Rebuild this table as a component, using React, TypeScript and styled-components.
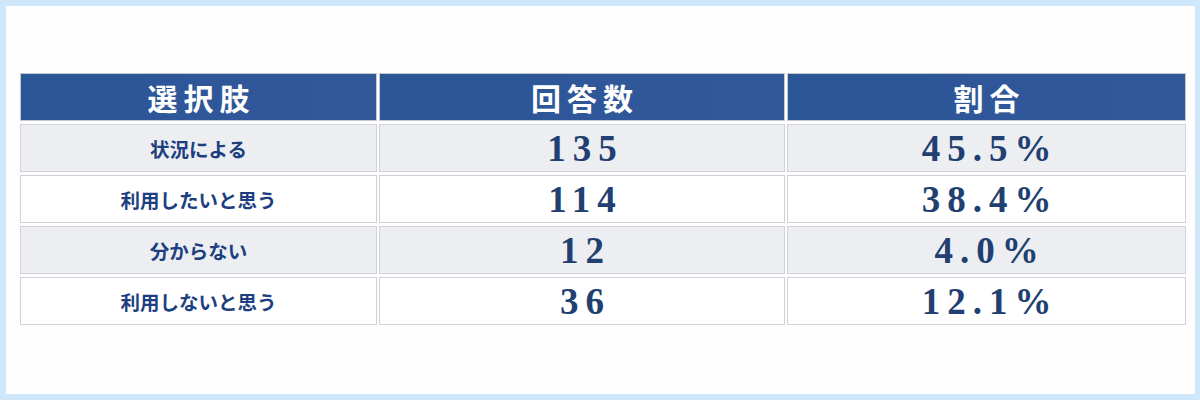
import React from "react";
import styled, { createGlobalStyle } from "styled-components";

const GlobalStyle = createGlobalStyle`
  html, body {
    margin: 0;
    padding: 0;
    background: #cfe7fb;
  }
  * {
    box-sizing: border-box;
  }
`;

const Frame = styled.div`
  width: 1200px;
  height: 400px;
  padding: 6px 5px 6px 6px;
`;

const Panel = styled.div`
  height: 100%;
  background: #fefefe;
  padding: 67px 0 0 14px;
`;

const Grid = styled.div`
  display: grid;
  grid-template-columns: 357px 406px 399px;
  column-gap: 2px;
  row-gap: 3px;
  grid-auto-rows: 48px;
`;

const HeadCell = styled.div`
  display: flex;
  align-items: center;
  justify-content: center;
  background: linear-gradient(90deg, #2a5597, #33589a);
  border: 1px solid #c4c8cf;
  color: #ffffff;
  font: 700 30px "Noto Sans CJK JP", "Noto Sans", sans-serif;
  letter-spacing: 6px;
  text-indent: 6px;
`;

const Cell = styled.div<{ $shade: boolean }>`
  display: flex;
  align-items: center;
  justify-content: center;
  background: ${(p) => (p.$shade ? "#eceef2" : "#ffffff")};
  border: 1px solid #cfd2d8;
`;

const Label = styled.span`
  font: 700 19.5px "Noto Sans CJK JP", "Noto Sans", sans-serif;
  color: #1d3f80;
`;

const Value = styled.span`
  font: 700 37px "Liberation Serif", "DejaVu Serif", serif;
  color: #213f70;
  letter-spacing: 7px;
  margin-right: -7px;
`;

const rows = [
  { label: "状況による", count: "135", rate: "45.5%" },
  { label: "利用したいと思う", count: "114", rate: "38.4%" },
  { label: "分からない", count: "12", rate: "4.0%" },
  { label: "利用しないと思う", count: "36", rate: "12.1%" },
];

export default function App() {
  return (
    <>
      <GlobalStyle />
      <Frame>
        <Panel>
          <Grid>
            <HeadCell>選択肢</HeadCell>
            <HeadCell>回答数</HeadCell>
            <HeadCell>割合</HeadCell>
            {rows.map((r, i) => (
              <React.Fragment key={r.label}>
                <Cell $shade={i % 2 === 0}>
                  <Label>{r.label}</Label>
                </Cell>
                <Cell $shade={i % 2 === 0}>
                  <Value>{r.count}</Value>
                </Cell>
                <Cell $shade={i % 2 === 0}>
                  <Value>{r.rate}</Value>
                </Cell>
              </React.Fragment>
            ))}
          </Grid>
        </Panel>
      </Frame>
    </>
  );
}
